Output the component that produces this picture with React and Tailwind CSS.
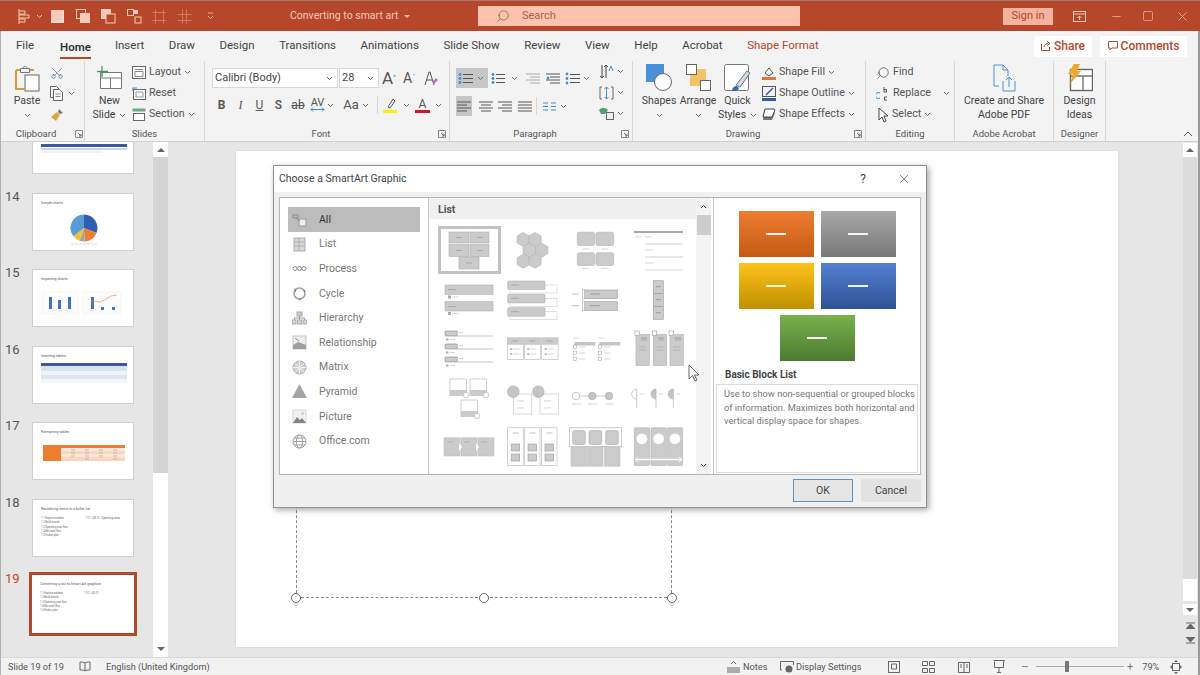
import { Scissors, Search, X, Minus, Square } from "lucide-react";

const Svg = ({ w, h, className = "", children }) => (
  <svg width={w} height={h} viewBox={`0 0 ${w} ${h}`} className={`shrink-0 block ${className}`} fill="none">
    {children}
  </svg>
);

const Chev = ({ c = "#666" }) => (
  <Svg w={7} h={5}>
    <path d="M1 1l2.5 2.5L6 1" stroke={c} strokeWidth="1" />
  </Svg>
);

const Launcher = ({ className }) => (
  <div className={`absolute top-[69px] ${className}`}>
    <Svg w={8} h={8}>
      <path d="M.5 7.5V.5h7v7z" stroke="#888" />
      <path d="M3 3l3 3M6 4v2H4" stroke="#666" />
    </Svg>
  </div>
);

function Group({ className, label, children, launcher }) {
  return (
    <div className={`relative flex flex-col h-full border-r border-[#d6d6d6] shrink-0 ${className}`}>
      <div className="h-[66px] flex">{children}</div>
      <div className={`text-center text-[9.5px] leading-[14px] text-[#555] ${launcher ? "pr-[12px]" : ""}`}>{label}</div>
      {launcher}
    </div>
  );
}

function LargeBtn({ icon, lines, chev, className = "" }) {
  return (
    <div className={`flex flex-col items-center text-[10.5px] leading-[14px] text-[#444] ${className}`}>
      <div className="h-[33px] flex items-center justify-center shrink-0">{icon}</div>
      {lines.map((l, i) => (
        <div key={i} className="flex items-center gap-1 whitespace-nowrap">
          {l}
          {chev === i && <Chev />}
        </div>
      ))}
      {chev === lines.length && (
        <div className="h-[14px] flex items-center">
          <Chev />
        </div>
      )}
    </div>
  );
}

function SmallBtn({ icon, label, chev = true, className = "" }) {
  return (
    <div className={`h-[21px] flex items-center gap-[3px] text-[10.7px] text-[#555] whitespace-nowrap ${className}`}>
      {icon}
      <span>{label}</span>
      {chev && <Chev />}
    </div>
  );
}

// horizontal lines icon, used for the paragraph buttons
const Lines = ({ rows, w = 15, h = 13, dots, c = "#555" }) => (
  <Svg w={w} h={h}>
    {rows.map((r, i) => (
      <path key={i} d={`M${r[0]} ${r[1]}H${r[2]}`} stroke={c} strokeWidth="1" />
    ))}
    {dots && dots.map((d, i) => <circle key={i} cx={d[0]} cy={d[1]} r="1.4" fill="#3d8fd1" />)}
  </Svg>
);

const Wdot = () => <span className="w-[20px] h-[1.5px] bg-white/90 block" />;

const bulletRows = [[5, 2.5, 15], [5, 6.5, 15], [5, 10.5, 15]];
const bulletDots = [[2, 2.5], [2, 6.5], [2, 10.5]];
const alignL = [[1, 2, 15], [1, 5, 11], [1, 8, 15], [1, 11, 11]];
const alignC = [[1, 2, 15], [3, 5, 13], [1, 8, 15], [3, 11, 13]];
const alignR = [[1, 2, 15], [5, 5, 15], [1, 8, 15], [5, 11, 15]];
const alignJ = [[1, 2, 15], [1, 5, 15], [1, 8, 15], [1, 11, 15]];

function TitleBar() {
  const c = "#f6c9b8";
  return (
    <div className="h-[31px] bg-[#b7472a] border-t border-[#9c7a70] flex items-center shrink-0">
      <div className="w-[290px] shrink-0 flex items-center pl-[15px]">
        <Svg w={16} h={15}>
          <path d="M4 0v15M4 2h6v3H4M4 6h10v3H4M4 10h6v3H4" stroke={c} />
        </Svg>
        <span className="ml-[5px]"><Chev c={c} /></span>
        <span className="ml-[8px] w-[13px] h-[13px] bg-[#f6c9b8] border-r-2 border-b-2 border-[#f1dcd4]" />
        <Svg w={15} h={15} className="ml-[12px]">
          <rect x=".5" y=".5" width="9" height="9" stroke={c} />
          <rect x="4" y="4" width="10" height="10" fill={c} />
        </Svg>
        <Svg w={15} h={15} className="ml-[10px]">
          <rect x="0" y="0" width="10" height="10" fill={c} />
          <rect x="5" y="5" width="9" height="9" stroke={c} fill="#b7472a" />
        </Svg>
        <Svg w={15} h={15} className="ml-[11px]">
          <rect x=".5" y=".5" width="6" height="6" stroke={c} />
          <rect x="8" y="8" width="6" height="6" stroke={c} />
          <rect x="7" y="1" width="4" height="4" fill={c} />
        </Svg>
        <Svg w={15} h={15} className="ml-[10px] opacity-40">
          <path d="M.5 3.5h14M.5 11.5h14M3.5.5v14M11.5.5v14" stroke={c} />
        </Svg>
        <Svg w={15} h={15} className="ml-[10px] opacity-40">
          <path d="M.5 5.5h14M.5 11.5h14M5.5.5v14M9.5.5v14" stroke={c} />
        </Svg>
        <span className="ml-[15px] opacity-80">
          <Svg w={7} h={8}>
            <path d="M1 1h5M1 4l2.5 2.5L6 4" stroke={c} />
          </Svg>
        </span>
      </div>
      <div className="w-[188px] shrink-0 text-[10.5px] text-[#f3c7b6] flex items-center gap-[6px]">
        Converting to smart art
        <span className="w-0 h-0 border-x-[3px] border-x-transparent border-t-[3px] border-t-[#f3c7b6]" />
      </div>
      <div className="w-[322px] h-[20px] shrink-0 bg-[#fbc3ae] flex items-center pl-[18px] gap-[12px] text-[11px] text-[#a5604a]">
        <Search size={14} strokeWidth={1.3} className="-scale-x-100" color="#8c5a49" />
        Search
      </div>
      <div className="w-[203px] shrink-0" />
      <div className="w-[50px] h-[17px] shrink-0 bg-[#f3b39e] flex items-center justify-center text-[11px] text-[#b7472a]">
        Sign in
      </div>
      <div className="ml-[20px] w-[13px] shrink-0">
        <Svg w={13} h={11}>
          <rect x=".5" y=".5" width="12" height="10" stroke={c} />
          <path d="M.5 3h12M6.5 9V5M4.5 7l2-2 2 2" stroke={c} />
        </Svg>
      </div>
      <Minus size={13} color={c} strokeWidth={1.2} className="ml-[24px]" />
      <Square size={12} color={c} strokeWidth={1.2} className="ml-[19px]" />
      <X size={15} color={c} strokeWidth={1.2} className="ml-[21px]" />
    </div>
  );
}

function Tabs() {
  const tabs = ["Insert", "Draw", "Design", "Transitions", "Animations", "Slide Show", "Review", "View", "Help", "Acrobat"];
  return (
    <div className="h-[30px] bg-[#f3f3f3] flex items-center shrink-0 pl-[16px] text-[11.5px] text-[#444] relative">
      <span>File</span>
      <span className="ml-[26px] font-semibold text-[#333] border-b-2 border-[#b7472a] h-[23px] mt-[2px] pt-[3px]">Home</span>
      <div className="ml-[24px] flex gap-[24.5px]">
        {tabs.map((t) => (
          <span key={t}>{t}</span>
        ))}
        <span className="text-[#b7472a]">Shape Format</span>
      </div>
      <div className="ml-auto mr-[13px] flex gap-[8px] text-[#b7472a] font-medium">
        <div className="w-[58px] h-[21px] bg-white flex items-center justify-center gap-[3px] text-[12px]">
          <Svg w={10} h={10}>
            <path d="M.5 3v6.5h8V6M3 6c0-2 2-3.5 4-3.5M6 .5l3 2-3 2" stroke="#b7472a" />
          </Svg>
          Share
        </div>
        <div className="w-[87px] h-[21px] bg-white flex items-center justify-center gap-[3px] text-[12px]">
          <Svg w={10} h={10}>
            <path d="M.5.5h9v6.5H4L2 9V7H.5z" stroke="#b7472a" />
          </Svg>
          Comments
        </div>
      </div>
    </div>
  );
}

function Ribbon() {
  return (
    <div className="h-[81px] bg-[#f3f3f3] border-b border-[#d0d0d0] flex shrink-0 relative">
      <Group
        className="w-[85px]"
        label="Clipboard"
        launcher={<Launcher className="left-[75px]" />}
      >
        <LargeBtn
          className="w-[48px] pl-[6px]"
          lines={["Paste"]}
          chev={1}
          icon={
            <Svg w={26} h={28}>
              <path d="M2 6h5M15 6h5M2 6v19h8" stroke="#d99a3c" strokeWidth="2" />
              <path d="M6.5 4.5h9v4h-9zM9 4c0-2 4-2 4 0" stroke="#777" />
              <rect x="11" y="11" width="14" height="16" fill="#fff" stroke="#666" />
            </Svg>
          }
        />
        <div className="flex flex-col pt-[1px] pl-[2px]">
          <div className="h-[21px] flex items-center">
            <Scissors size={14} strokeWidth={1.2} color="#4a6e95" className="-rotate-90" />
          </div>
          <div className="h-[21px] flex items-center gap-[4px]">
            <Svg w={14} h={15}>
              <path d="M3.5 11.5H.5V.5h6l3 3" stroke="#666" />
              <path d="M3.5 3.5h6l3 3v8h-9z" fill="#fff" stroke="#666" />
              <path d="M5.5 8h5M5.5 10.5h5" stroke="#888" />
            </Svg>
            <Chev />
          </div>
          <div className="h-[21px] flex items-center">
            <Svg w={14} h={14}>
              <path d="M9 1l4 4-3 1-2-2z" fill="#777" />
              <path d="M7 4l3 3-4 6-5-4z" fill="#e2a33d" />
            </Svg>
          </div>
        </div>
      </Group>

      <Group className="w-[120px]" label="Slides">
        <LargeBtn
          className="w-[45px] ml-[2px]"
          lines={["New", "Slide"]}
          chev={1}
          icon={
            <Svg w={26} h={24}>
              <path d="M3.5 6.5h21v16h-21z" stroke="#777" fill="#fff" />
              <path d="M4 12h20M13.5 12v10" stroke="#777" />
              <path d="M5 0v11M0 5.5h11" stroke="#3f9a58" strokeWidth="1.3" />
            </Svg>
          }
        />
        <div className="flex flex-col pt-[1px]">
          <SmallBtn
            label="Layout"
            icon={
              <Svg w={14} h={13}>
                <rect x=".5" y=".5" width="13" height="12" fill="#fff" stroke="#666" />
                <path d="M3 3.5h8M3 5.5v5h8v-5z" stroke="#888" />
              </Svg>
            }
          />
          <SmallBtn
            label="Reset"
            chev={false}
            icon={
              <Svg w={14} h={13}>
                <rect x="1.5" y="2.5" width="12" height="10" fill="#fff" stroke="#666" />
                <path d="M1 4V1h4" stroke="#3d8fd1" strokeWidth="1.2" />
                <path d="M4 5h7v5H4z" stroke="#999" />
              </Svg>
            }
          />
          <SmallBtn
            label="Section"
            icon={
              <Svg w={14} h={13}>
                <rect x=".5" y=".5" width="13" height="3" fill="#6ba97e" />
                <rect x="1.5" y="5.5" width="11" height="7" fill="#fff" stroke="#666" />
              </Svg>
            }
          />
        </div>
      </Group>

      <Group
        className="w-[245px]"
        label="Font"
        launcher={<Launcher className="left-[233px]" />}
      >
        <div className="flex flex-col pl-[7px] pt-[7px]">
          <div className="flex items-center h-[20px] text-[#444] text-[11px]">
            <div className="w-[126px] h-[20px] bg-white border border-[#d8d8d8] flex items-center justify-between pl-[2px] pr-[4px]">
              Calibri (Body)
              <Chev />
            </div>
            <div className="ml-[1px] w-[40px] h-[20px] bg-white border border-[#d8d8d8] flex items-center justify-between pl-[2px] pr-[4px]">
              28
              <Chev />
            </div>
            <span className="ml-[3px] w-[19px] text-[17px] text-[#555] leading-none">A<sup className="text-[7px] text-[#3d8fd1]">^</sup></span>
            <span className="ml-[2px] w-[19px] text-[14px] text-[#555] leading-none">A<sup className="text-[7px] text-[#3d8fd1]">ˇ</sup></span>
            <Svg w={15} h={15} className="ml-[2px]">
              <path d="M1 14L5 1h1l4 13M3 9h5" stroke="#555" />
              <path d="M8 11l4-4 2 2-4 4z" fill="#b678c9" />
            </Svg>
          </div>
          <div className="flex items-center h-[20px] mt-[7px] text-[#555] text-[12px]">
            <span className="w-[19px] text-center font-bold text-[12px]">B</span>
            <span className="w-[19px] text-center italic font-['Liberation_Serif',serif]">I</span>
            <span className="w-[19px] text-center underline">U</span>
            <span className="w-[19px] text-center font-medium">S</span>
            <span className="w-[20px] text-center line-through text-[12px]">ab</span>
            <span className="w-[19px] text-center text-[11px] leading-[9px] flex flex-col items-center">
              AV
              <Svg w={15} h={5}>
                <path d="M1 2.5h13M1 2.5l2-2M1 2.5l2 2M14 2.5l-2-2M14 2.5l-2 2" stroke="#3d8fd1" />
              </Svg>
            </span>
            <Chev />
            <span className="ml-[7px] w-[20px] text-center text-[13px]">Aa</span>
            <span className="ml-[1px]"><Chev /></span>
            <span className="ml-[8px] w-px h-[18px] bg-[#d6d6d6]" />
            <span className="ml-[4px]">
              <Svg w={16} h={16}>
                <path d="M6 10l5-8 2 2-5 7z" stroke="#555" />
                <rect x="1" y="13" width="14" height="3" fill="#fcf000" />
              </Svg>
            </span>
            <span className="ml-[5px]"><Chev /></span>
            <span className="ml-[5px] flex flex-col items-center w-[15px] text-[12px] leading-[12px]">
              A
              <span className="w-[15px] h-[3px] bg-[#d8141c]" />
            </span>
            <span className="ml-[5px]"><Chev /></span>
          </div>
        </div>
      </Group>

      <Group
        className="w-[183px]"
        label="Paragraph"
        launcher={<Launcher className="left-[171px]" />}
      >
        <div className="flex flex-col pl-[6px] pt-[7px] w-[149px]">
          <div className="flex items-center h-[20px]">
            <div className="w-[32px] h-[20px] bg-[#c6c6c6] flex items-center pl-[2px] gap-[4px]">
              <Lines rows={bulletRows} dots={bulletDots} />
              <Chev />
            </div>
            <span className="ml-[3px]"><Lines rows={bulletRows} dots={bulletDots} w={14} /></span>
            <span className="ml-[6px]"><Chev /></span>
            <span className="ml-[7px]"><Lines rows={alignR} c="#aaa" /></span>
            <span className="ml-[5px]"><Lines rows={alignR} dots={[[3, 6]]} /></span>
            <span className="ml-[5px]"><Lines rows={bulletRows} dots={[[2, 2], [2, 6.5], [2, 11]]} /></span>
            <span className="ml-[3px]"><Chev /></span>
          </div>
          <div className="flex items-center h-[20px] mt-[8px]">
            <div className="w-[16px] h-[20px] bg-[#c6c6c6] flex items-center">
              <Lines rows={alignL} />
            </div>
            <span className="ml-[6px]"><Lines rows={alignC} /></span>
            <span className="ml-[4px]"><Lines rows={alignR} /></span>
            <span className="ml-[5px]"><Lines rows={alignJ} /></span>
            <span className="ml-[4px] w-px h-[18px] bg-[#d6d6d6]" />
            <span className="ml-[5px]">
              <Lines rows={[[1, 3, 6], [1, 6.5, 6], [1, 10, 6], [9, 3, 14], [9, 6.5, 14], [9, 10, 14]]} c="#3d8fd1" />
            </span>
            <span className="ml-[3px]"><Chev /></span>
          </div>
        </div>
        <div className="flex flex-col">
          <div className="h-[21px] flex items-center gap-[3px]">
            <Svg w={15} h={16}>
              <path d="M3 1v13M1 12l2 2 2-2M7 14V1M5 3l2-2 2 2" stroke="#444" />
              <path d="M10 7l2-5 2 5" stroke="#3d8fd1" />
            </Svg>
            <Chev />
          </div>
          <div className="h-[21px] flex items-center gap-[3px]">
            <Svg w={15} h={14}>
              <path d="M3 1H1v12h2M12 1h2v12h-2" stroke="#666" />
              <path d="M7.5 1v12M5.5 3l2-2 2 2M5.5 11l2 2 2-2" stroke="#3d8fd1" />
            </Svg>
            <Chev />
          </div>
          <div className="h-[21px] flex items-center gap-[3px]">
            <Svg w={15} h={13}>
              <path d="M0 3c3-3 7-2 9 0l-3 4H2z" fill="#4ca36b" />
              <rect x="7.5" y="5.5" width="7" height="7" fill="#eee" stroke="#666" />
            </Svg>
            <Chev />
          </div>
        </div>
      </Group>

      <Group
        className="w-[233px]"
        label="Drawing"
        launcher={<Launcher className="left-[221px]" />}
      >
        <LargeBtn
          className="w-[40px] ml-[6px]"
          lines={["Shapes"]}
          chev={1}
          icon={
            <Svg w={26} h={27}>
              <rect x="0" y="0" width="18" height="18" fill="#4a90d9" />
              <circle cx="17" cy="18" r="8.5" fill="#fff" stroke="#666" />
            </Svg>
          }
        />
        <LargeBtn
          className="w-[38px]"
          lines={["Arrange"]}
          chev={1}
          icon={
            <Svg w={25} h={27}>
              <rect x="4" y="5" width="16" height="17" fill="#f2c263" />
              <rect x=".5" y=".5" width="10" height="10" fill="#fff" stroke="#666" />
              <rect x="14.5" y="16.5" width="10" height="10" fill="#fff" stroke="#666" />
            </Svg>
          }
        />
        <LargeBtn
          className="w-[41px]"
          lines={["Quick", "Styles"]}
          chev={1}
          icon={
            <Svg w={27} h={28}>
              <rect x=".5" y=".5" width="24" height="26" rx="2" fill="#fff" stroke="#777" />
              <path d="M12 21l11-14 3 2-10 14z" fill="#cfdbe8" stroke="#777" />
              <path d="M8 27c0-3 2-5 5-5l2 2c-1 3-4 3-7 3z" fill="#2f6fa8" />
            </Svg>
          }
        />
        <div className="flex flex-col ml-[4px] pt-[1px]">
          <SmallBtn
            label="Shape Fill"
            icon={
              <Svg w={14} h={14}>
                <path d="M3 7l4-5 4 5-4 3z" stroke="#555" />
                <rect x="0" y="11" width="14" height="3" fill="#e97132" />
              </Svg>
            }
          />
          <SmallBtn
            label="Shape Outline"
            icon={
              <Svg w={14} h={15}>
                <rect x=".5" y=".5" width="13" height="10" stroke="#555" />
                <path d="M4 9l7-7" stroke="#2f5fa8" strokeWidth="1.5" />
                <rect x="0" y="12" width="14" height="3" fill="#2f5fa8" />
              </Svg>
            }
          />
          <SmallBtn
            label="Shape Effects"
            icon={
              <Svg w={14} h={13}>
                <path d="M2 3h9l2 2-3 7H1z" fill="#777" />
                <path d="M3 1h9l1 1-3 7H1z" fill="#fff" stroke="#444" />
              </Svg>
            }
          />
        </div>
      </Group>

      <Group className="w-[89px]" label="Editing">
        <div className="flex flex-col pl-[10px] pt-[1px] w-full">
          <SmallBtn
            label="Find"
            chev={false}
            icon={
              <Search size={14} strokeWidth={1.2} color="#444" className="-scale-x-100" />
            }
          />
          <div className="flex items-center">
            <SmallBtn
              label="Replace"
              chev={false}
              icon={
                <Svg w={14} h={15}>
                  <path d="M4 7a3 3 0 1 0 0 5" stroke="#3d8fd1" />
                  <path d="M8 1v5M8 3.5h2.5v2.5H8M11 11h-2.5v3H11" stroke="#555" />
                </Svg>
              }
            />
            <span className="ml-[12px]"><Chev /></span>
          </div>
          <SmallBtn
            label="Select"
            icon={
              <Svg w={13} h={16}>
                <path d="M3 1v12l3-3 2 5 2-1-2-5h4z" fill="#fff" stroke="#444" />
              </Svg>
            }
          />
        </div>
      </Group>

      <Group className="w-[99px]" label="Adobe Acrobat">
        <LargeBtn
          className="w-full"
          lines={["Create and Share", "Adobe PDF"]}
          icon={
            <Svg w={23} h={28}>
              <path d="M6 22H1V1h9l5 5v6" stroke="#4a90d9" />
              <path d="M10 1v5h5" stroke="#4a90d9" />
              <path d="M10 17v10h12V17M16 23V13M13 16l3-3 3 3" stroke="#4a90d9" />
            </Svg>
          }
        />
      </Group>

      <Group className="w-[52px]" label="Designer">
        <LargeBtn
          className="w-full"
          lines={["Design", "Ideas"]}
          icon={
            <Svg w={27} h={28}>
              <rect x="4.5" y="5.5" width="22" height="21" fill="#fff" stroke="#666" strokeWidth="1.4" />
              <path d="M5 12h21M17 12v14" stroke="#777" strokeWidth="1.4" />
              <path d="M8 0h6l-3 7h4L4 20l3-10H2z" fill="#f0a92e" />
            </Svg>
          }
        />
      </Group>

      <div className="absolute right-[7px] bottom-[4px]">
        <Svg w={10} h={6}>
          <path d="M1 5l4-4 4 4" stroke="#555" />
        </Svg>
      </div>
    </div>
  );
}

const tx = { fontSize: 3.6, fill: "#555" };

function Thumb({ n, active, children, className = "" }) {
  return (
    <div className={`flex h-[58px] shrink-0 ${className}`}>
      <span className={`w-[32px] pl-[5px] text-[13px] leading-[8px] ${active ? "text-[#b7472a]" : "text-[#555]"}`}>
        {n}
      </span>
      <div className={`w-[102px] h-[58px] bg-white ${active ? "outline-[3px] outline-[#b7472a]" : "border border-[#cfcfcf]"}`}>
        <svg width="102" height="58" viewBox="0 0 102 58" className="block" fill="none">{children}</svg>
      </div>
    </div>
  );
}

const ListLines = ({ right }) => (
  <>
    {["1.1 Explore markets", "1.2 Build brands", "1.3 Operating cost flow", "1.4 Net cash flow", "1.5 Endow plan"].map((t, i) => (
      <text key={t} x="8" y={19 + i * 4.3} style={{ fontSize: 2.6, fill: "#666" }}>{t}</text>
    ))}
    <text x="52" y="19" style={{ fontSize: 2.6, fill: "#666" }}>{right}</text>
  </>
);

function SlidePanel() {
  return (
    <div className="w-[168px] bg-[#e6e6e6] relative overflow-hidden shrink-0">
      <div className="flex flex-col gap-[18.5px] -mt-[26px]">
        <Thumb n="">
          <rect x="8" y="27" width="86" height="3" fill="#3c5a99" />
          <rect x="8" y="31" width="86" height="2" fill="#c9d3e6" />
          <path d="M9 35h60" stroke="#ccc" strokeWidth=".6" />
        </Thumb>
        <Thumb n="14">
          <text x="8" y="10" style={tx}>Simple charts</text>
          <path d="M51 34V20.5A13.5 13.5 0 0 1 63.5 39.06z" fill="#2f5fb5" />
          <path d="M51 34L63.5 39.06A13.5 13.5 0 0 1 51.5 47.5z" fill="#ed7d31" />
          <path d="M51 34L51.5 47.5A13.5 13.5 0 0 1 46.4 46.7z" fill="#a5a5a5" />
          <path d="M51 34L46.4 46.7A13.5 13.5 0 0 1 40.4 42.3z" fill="#f2c230" />
          <path d="M51 34L40.4 42.3A13.5 13.5 0 0 1 51 20.5z" fill="#5b9bd5" />
          <path d="M38 50h26" stroke="#ccc" strokeWidth=".8" strokeDasharray="3 1" />
        </Thumb>
        <Thumb n="15">
          <text x="8" y="10" style={tx}>Importing charts</text>
          <rect x="9" y="22" width="36" height="22" fill="#fcfcfc" stroke="#eee" strokeWidth=".5" />
          <rect x="16" y="27" width="3" height="12" fill="#4472c4" />
          <rect x="25" y="30" width="3" height="9" fill="#4472c4" />
          <rect x="35" y="27" width="3" height="12" fill="#4472c4" />
          <rect x="50" y="22" width="38" height="22" fill="#fcfcfc" stroke="#eee" strokeWidth=".5" />
          <rect x="58" y="27" width="3" height="12" fill="#4472c4" />
          <rect x="68" y="37" width="3" height="3" fill="#4472c4" />
          <rect x="79" y="37" width="3" height="3" fill="#4472c4" />
          <path d="M58 31l10 1 10-6 6-1" stroke="#ed7d31" strokeWidth=".6" />
        </Thumb>
        <Thumb n="16">
          <text x="8" y="10" style={tx}>Inserting tables</text>
          <rect x="8" y="16" width="86" height="3" fill="#3c5a99" />
          <rect x="8" y="19" width="86" height="5" fill="#d9e0ef" />
          <rect x="8" y="24" width="86" height="4" fill="#f0f2f8" />
          <rect x="8" y="28" width="86" height="4" fill="#dfe4f1" />
          <rect x="8" y="32" width="86" height="4" fill="#f4f6fa" />
        </Thumb>
        <Thumb n="17">
          <text x="8" y="10" style={tx}>Formatting tables</text>
          <rect x="10" y="22" width="82" height="3" fill="#ed7d31" />
          <rect x="10" y="25" width="18" height="13" fill="#ed7d31" />
          <rect x="28" y="25" width="64" height="3" fill="#fde9dc" />
          <rect x="28" y="28" width="64" height="3" fill="#fbd5bd" />
          <rect x="28" y="31" width="64" height="3" fill="#fde9dc" />
          <rect x="28" y="34" width="64" height="4" fill="#fbd5bd" />
          <path d="M38 27h4M52 27h4M66 27h4M80 27h4M38 30h4M52 30h4M66 30h4M80 30h4M38 33h4M52 33h4M66 33h4M80 33h4M52 36h4M80 36h4" stroke="#999" strokeWidth=".6" />
        </Thumb>
        <Thumb n="18">
          <text x="8" y="10" style={tx}>Reordering items in a bullet list</text>
          <ListLines right="1.9.1 / 49.31 - Operating costs" />
        </Thumb>
        <Thumb n="19" active>
          <text x="8" y="10" style={tx}>Converting a list to Smart Art graphics</text>
          <ListLines right="1.9.2 / 49.31" />
        </Thumb>
      </div>
      {/* scrollbar */}
      <div className="absolute right-0 top-0 bottom-0 w-[15px] bg-white flex flex-col">
        <div className="h-[15px] bg-white flex items-center justify-center">
          <span className="w-0 h-0 border-x-[4px] border-x-transparent border-b-[4px] border-b-[#666]" />
        </div>
        <div className="h-[316px] bg-[#d4d4d4]" />
        <div className="flex-1" />
        <div className="h-[15px] flex items-center justify-center mb-[1px]">
          <span className="w-0 h-0 border-x-[4px] border-x-transparent border-t-[4px] border-t-[#666]" />
        </div>
      </div>
    </div>
  );
}

const Bx = ({ x, y, w, h, r = 0, f = "#cbcbcb", s = "#b0b0b0" }) => (
  <rect x={x} y={y} width={w} height={h} rx={r} fill={f} stroke={s} strokeWidth=".6" />
);
const Ln = ({ x, y, w, c = "#c4c4c4", t = 0.7 }) => <path d={`M${x} ${y}h${w}`} stroke={c} strokeWidth={t} />;
const hex = (cx, cy, r = 7) =>
  [0, 1, 2, 3, 4, 5]
    .map((i) => {
      const a = (Math.PI / 3) * i + Math.PI / 6;
      return `${(cx + r * Math.cos(a)).toFixed(1)},${(cy + r * Math.sin(a)).toFixed(1)}`;
    })
    .join(" ");

const galleryThumbs = [
  <>
    <Bx x={11} y={6} w={20} h={11} /><Bx x={32} y={6} w={19} h={11} />
    <Bx x={11} y={18.5} w={20} h={12} /><Bx x={32} y={18.5} w={19} h={12} />
    <Bx x={21} y={31} w={20} h={12} />
    <Ln x={18} y={11.5} w={6} c="#999" /><Ln x={39} y={11.5} w={6} c="#999" /><Ln x={18} y={24.5} w={6} c="#999" /><Ln x={39} y={24.5} w={6} c="#999" /><Ln x={28} y={37} w={6} c="#999" />
  </>,
  <>
    {[[22.3, 13.5], [34, 13.5], [28.3, 24.2], [40.7, 24.2], [22.3, 35.2], [34, 35.2]].map(([x, y], i) => (
      <polygon key={i} points={hex(x, y)} fill="#cbcbcb" stroke="#b0b0b0" strokeWidth=".6" />
    ))}
  </>,
  <>
    <Bx x={13.3} y={6.2} w={17.4} h={13.3} r={2} /><Bx x={32} y={6.2} w={17.7} h={13.3} r={2} />
    <Bx x={13.3} y={26.8} w={17.4} h={12.7} r={2} /><Bx x={32} y={26.8} w={17.7} h={12.7} r={2} />
    <Ln x={18} y={23} w={7} /><Ln x={37} y={23} w={7} /><Ln x={18} y={42.5} w={7} /><Ln x={37} y={42.5} w={7} />
  </>,
  <>
    <Ln x={7} y={6} w={49} c="#888" t={1.3} />
    <Ln x={8} y={11} w={6} /><Ln x={18} y={11} w={6} /><Ln x={18} y={18} w={38} c="#bbb" />
    <Ln x={18} y={24} w={8} /><Ln x={18} y={31} w={38} c="#bbb" /><Ln x={18} y={37} w={8} /><Ln x={18} y={44} w={38} c="#ccc" />
  </>,
  <>
    <Bx x={7} y={9} w={48} h={9.3} /><Bx x={7} y={25.7} w={48} h={9.3} />
    <Ln x={10} y={13.5} w={8} c="#999" /><Ln x={10} y={30.5} w={8} c="#999" />
    <rect x={10} y={19.5} width={3} height={3} fill="#aaa" /><rect x={10} y={36} width={3} height={3} fill="#aaa" />
    <Ln x={14} y={21} w={6} /><Ln x={14} y={37.5} w={6} />
  </>,
  <>
    {[5, 18.3, 31.7].map((y) => (
      <g key={y}>
        <rect x={9} y={y + 4} width={47} height={8} fill="#fff" stroke="#ccc" strokeWidth=".6" />
        <Bx x={6.7} y={y} w={37.3} h={8.6} r={1} />
        <Ln x={10} y={y + 4} w={8} c="#999" />
      </g>
    ))}
  </>,
  <>
    {[14, 25.7].map((y) => (
      <g key={y}>
        <Ln x={8} y={y + 4} w={7} c="#aaa" />
        <Bx x={18.3} y={y} w={35} h={8.6} s="#999" />
        <rect x={18.3} y={y - 0.5} width={2} height={9.6} fill="#fff" stroke="#aaa" strokeWidth=".5" />
        <Ln x={26} y={y + 4} w={10} c="#888" />
      </g>
    ))}
  </>,
  <>
    {[4.7, 17.7, 30.7].map((y) => (
      <g key={y}>
        <Bx x={26.3} y={y} w={10} h={12.6} s="#999" />
        <Ln x={29} y={y + 6} w={5} c="#888" />
      </g>
    ))}
  </>,
  <>
    {[6, 19, 32].map((y) => (
      <g key={y}>
        <Bx x={7} y={y} w={12.3} h={5} r={1} s="#888" />
        <Ln x={19} y={y + 5} w={36} c="#aaa" />
        <Ln x={21} y={y + 1.5} w={4} c="#bbb" />
        <rect x={8} y={y + 7.5} width={2.5} height={2} fill="#aaa" />
        <Ln x={12} y={y + 8.5} w={5} />
      </g>
    ))}
  </>,
  <>
    {[6.3, 23.3, 40.7].map((x) => (
      <g key={x}>
        <rect x={x} y={12.8} width={16.4} height={21.7} fill="#fff" stroke="#b5b5b5" strokeWidth=".6" />
        <rect x={x} y={12.8} width={16.4} height={7} fill="#cbcbcb" />
        <Ln x={x + 5} y={16} w={6} c="#999" />
        <rect x={x + 3} y={23} width={2} height={2} fill="#bbb" /><Ln x={x + 6} y={24} w={6} />
        <rect x={x + 3} y={28} width={2} height={2} fill="#bbb" /><Ln x={x + 6} y={29} w={6} />
      </g>
    ))}
  </>,
  <>
    {[9.3, 34.3].map((x) => (
      <g key={x}>
        <rect x={x + 1} y={17} width={21} height={3.5} fill="#c4c4c4" />
        <Ln x={x} y={13} w={6} />
        {[20, 26, 32].map((y) => (
          <g key={y}>
            <rect x={x} y={y} width={3.4} height={3.4} fill="#fff" stroke="#999" strokeWidth=".5" />
            <Ln x={x + 6} y={y + 2} w={6} />
          </g>
        ))}
      </g>
    ))}
  </>,
  <>
    {[9, 26.3, 43].map((x) => (
      <g key={x}>
        <Bx x={x} y={9.5} w={13.3} h={31} />
        <Ln x={x + 5} y={13} w={6} c="#888" /><Ln x={x + 5} y={15} w={6} c="#999" />
        <Ln x={x + 3} y={22} w={7} c="#aaa" /><Ln x={x + 3} y={25} w={7} c="#aaa" />
        <rect x={x - 1} y={6} width={4.5} height={4.5} fill="#fff" stroke="#888" strokeWidth=".5" />
      </g>
    ))}
  </>,
  <>
    {[[12, 4], [32, 4], [23, 25]].map(([x, y]) => (
      <g key={x}>
        <rect x={x} y={y} width={16.5} height={16.7} fill="#fff" stroke="#b0b0b0" strokeWidth=".6" />
        <rect x={x} y={y + 11} width={16.5} height={5.7} fill="#cbcbcb" />
        <circle cx={x + 16} cy={y + 16} r={2.8} fill="#fff" stroke="#aaa" strokeWidth=".6" />
      </g>
    ))}
  </>,
  <>
    {[[12.3, 19], [39, 19]].map(([x, y]) => (
      <g key={x}>
        <rect x={x} y={y} width={18.5} height={20} fill="#fff" stroke="#c0c0c0" strokeWidth=".6" />
        <Ln x={x + 4} y={y + 7} w={7} /><Ln x={x + 4} y={y + 14} w={7} />
      </g>
    ))}
    <circle cx={12.3} cy={16.7} r={5.8} fill="#c4c4c4" stroke="#aaa" strokeWidth=".6" />
    <circle cx={37.3} cy={16.7} r={5.8} fill="#c4c4c4" stroke="#aaa" strokeWidth=".6" />
  </>,
  <>
    <Ln x={12} y={21} w={33} c="#bbb" />
    <circle cx={12} cy={21} r={3.7} fill="#fff" stroke="#aaa" strokeWidth=".7" />
    <circle cx={28.3} cy={21} r={3.7} fill="#c4c4c4" stroke="#aaa" strokeWidth=".7" />
    <circle cx={45} cy={21} r={3.7} fill="#c4c4c4" stroke="#aaa" strokeWidth=".7" />
    <Ln x={8} y={29} w={9} /><Ln x={24} y={29} w={9} /><Ln x={41} y={29} w={9} />
  </>,
  <>
    {[9.7, 29, 46.3].map((x) => (
      <g key={x}>
        <path d={`M${x} 14a5 5 0 0 0 0 10z`} fill={x === 9.7 ? "#fff" : "#c4c4c4"} stroke="#aaa" strokeWidth=".6" />
        <path d={`M${x} 24v9`} stroke="#aaa" strokeWidth=".6" />
        <Ln x={x + 3} y={19} w={4} />
      </g>
    ))}
  </>,
  <>
    <Bx x={6} y={13.8} w={16} h={18.2} s="#c0c0c0" /><Bx x={23} y={13.8} w={16} h={18.2} s="#c0c0c0" /><Bx x={40} y={13.8} w={16} h={18.2} s="#c0c0c0" />
    <path d={`M21 19l3 4-3 4zM38 19l3 4-3 4z`} fill="#fff" />
    <Ln x={9} y={18} w={6} c="#aaa" /><Ln x={26} y={18} w={6} c="#aaa" /><Ln x={43} y={18} w={6} c="#aaa" />
  </>,
  <>
    {[6.7, 23.5, 40.5].map((x) => (
      <g key={x}>
        <rect x={x} y={3.8} width={15.5} height={37.7} fill="#fff" stroke="#b5b5b5" strokeWidth=".6" />
        <Ln x={x + 5} y={9} w={6} c="#aaa" />
        <Bx x={x + 3.5} y={20} w={8.5} h={7} s="#999" />
        <Bx x={x + 3.5} y={30} w={8.5} h={7} s="#999" />
      </g>
    ))}
  </>,
  <>
    <rect x={5.3} y={3.8} width={52.4} height={19} fill="#fff" stroke="#aaa" strokeWidth=".6" />
    {[8.7, 25, 41.7].map((x) => (
      <Bx key={x} x={x} y={6.5} w={12.6} h={14} r={2} s="#aaa" />
    ))}
    {[7, 23.5, 40.5].map((x) => (
      <Bx key={x} x={x} y={22.8} w={15.5} h={19.4} s="#c0c0c0" />
    ))}
  </>,
  <>
    {[7.3, 24, 40.3].map((x) => (
      <g key={x}>
        <Bx x={x} y={3.8} w={15.3} h={37.7} r={1} />
        <circle cx={x + 7.6} cy={14.8} r={5.4} fill="#fff" />
      </g>
    ))}
    <path d="M9 35.5h45" stroke="#fff" strokeWidth="1.6" />
    <path d="M11 33l-3 2.5 3 2.5M52 33l3 2.5-3 2.5" stroke="#fff" strokeWidth="1" />
  </>,
];

const catIcon = {
  list: <><rect x="2" y="1" width="11" height="13" fill="#cfcfcf" stroke="#999" /><path d="M2 5h11M2 9h11M7 1v13" stroke="#999" /></>,
  process: <><circle cx="3" cy="7.5" r="2" stroke="#777" /><circle cx="7.5" cy="7.5" r="2" stroke="#777" /><circle cx="12" cy="7.5" r="2" stroke="#777" /></>,
  cycle: <><circle cx="7.5" cy="7.5" r="5.5" stroke="#888" strokeWidth="1.5" /><path d="M2 3l2 1-1 2M13 4l-1 2M7 14l2-1" stroke="#555" /></>,
  hierarchy: <><rect x="5" y="1" width="5" height="4" fill="#bbb" stroke="#999" /><path d="M7.5 5v2M2.5 7h10v2M2.5 7v2M7.5 7v2" stroke="#888" /><rect x="0" y="9" width="4" height="4" fill="#ccc" stroke="#999" /><rect x="5.5" y="9" width="4" height="4" fill="#ccc" stroke="#999" /><rect x="11" y="9" width="4" height="4" fill="#ccc" stroke="#999" /></>,
  relationship: <><rect x="1" y="1" width="13" height="13" fill="#e9e9e9" stroke="#bbb" /><path d="M1 10l5-3 8 3v4H1z" fill="#888" /><path d="M3 3l4 3" stroke="#777" /></>,
  matrix: <><circle cx="7.5" cy="7.5" r="6.5" fill="#c5c5c5" stroke="#999" /><path d="M7.5 1v13M1 7.5h13M3 3l9 9M12 3l-9 9" stroke="#eee" /></>,
  pyramid: <path d="M7.5 0L15 14H0z" fill="#8f8f8f" />,
  picture: <><rect x="1" y="1" width="13" height="13" fill="#eee" stroke="#ccc" /><path d="M1 14l4-6 3 3 2-2 4 5z" fill="#666" /><circle cx="10.5" cy="4.5" r="1.3" fill="#bbb" /></>,
  office: <><circle cx="7.5" cy="7.5" r="6.5" stroke="#888" /><ellipse cx="7.5" cy="7.5" rx="3" ry="6.5" stroke="#888" /><path d="M1 7.5h13M2 4h11M2 11h11" stroke="#888" /></>,
};

function Dialog() {
  const cats = [
    ["List", "list"], ["Process", "process"], ["Cycle", "cycle"], ["Hierarchy", "hierarchy"],
    ["Relationship", "relationship"], ["Matrix", "matrix"], ["Pyramid", "pyramid"], ["Picture", "picture"], ["Office.com", "office"],
  ];
  return (
    <div className="absolute left-[273px] top-[165px] w-[654px] h-[343px] bg-[#f0f0f0] border border-[#8f8f8f] shadow-[2px_2px_6px_rgba(0,0,0,0.35)] flex flex-col">
      <div className="h-[26px] bg-white flex items-center pl-[5px] pr-[15px] text-[10.5px] text-[#444] shrink-0">
        Choose a SmartArt Graphic
        <span className="ml-auto text-[12px] mr-[31px]">?</span>
        <X size={14} strokeWidth={1.2} color="#444" />
      </div>
      <div className="h-[5px] shrink-0" />
      <div className="mx-[5px] h-[278px] flex shrink-0 border border-[#b5b5b5] bg-white">
        <div className="w-[149px] border-r border-[#c8c8c8] pl-[8px] pt-[9px] shrink-0 text-[10.5px] text-[#777]">
          <div className="w-[132px] h-[25px] bg-[#bcbcbc] flex items-center text-[#333]">
            <span className="w-[31px] pl-[4px]">
              <Svg w={16} h={14}>
                <rect x="7" y="6" width="7" height="7" fill="#eee" stroke="#999" />
                <path d="M1 2h5v3H1zM4 5l4 3" stroke="#888" />
              </Svg>
            </span>
            All
          </div>
          {cats.map(([t, k]) => (
            <div key={t} className="h-[24.6px] flex items-center">
              <span className="w-[31px] pl-[4px] opacity-80">
                <Svg w={15} h={15}>{catIcon[k]}</Svg>
              </span>
              {t}
            </div>
          ))}
        </div>
        <div className="w-[285px] border-r border-[#c8c8c8] shrink-0 flex overflow-hidden">
          <div className="w-[268px] shrink-0">
            <div className="h-[20px] mt-[1px] bg-[#f0f0f0] pl-[9px] text-[10.5px] font-bold text-[#555] leading-[21px]">List</div>
            <div className="grid grid-cols-[repeat(4,63px)] auto-rows-[49.5px] ml-[9px] mt-[7px]">
              {galleryThumbs.map((t, i) => (
                <div key={i} className={i === 0 ? "h-[48px] w-[63px] outline-[3px] -outline-offset-[3px] outline-[#c2c2c2]" : ""}>
                  <svg width="63" height="49" viewBox="0 0 63 49" className="block" fill="none">{t}</svg>
                </div>
              ))}
            </div>
          </div>
          <div className="w-[15px] ml-[-1px] bg-[#f3f3f3] flex flex-col items-center">
            <div className="h-[17px] flex items-center justify-center">
              <Svg w={7} h={5}><path d="M1 4l2.5-2.5L6 4" stroke="#555" /></Svg>
            </div>
            <div className="h-[20px] w-[14px] bg-[#cdcdcd]" />
            <div className="flex-1" />
            <div className="h-[18px] flex items-center justify-center">
              <Chev c="#555" />
            </div>
          </div>
        </div>
        <div className="flex-1 flex flex-col pt-[13px] pl-[2px] pr-[2px]">
          <div className="flex flex-col items-center gap-[6px]">
            <div className="flex gap-[7px]">
              <div className="w-[75px] h-[46px] bg-linear-to-b from-[#ed7d31] to-[#c55a11] flex items-center justify-center"><Wdot /></div>
              <div className="w-[75px] h-[46px] bg-linear-to-b from-[#a8a8a8] to-[#787878] flex items-center justify-center"><Wdot /></div>
            </div>
            <div className="flex gap-[7px]">
              <div className="w-[75px] h-[46px] bg-linear-to-b from-[#ffc21a] to-[#bf9000] flex items-center justify-center"><Wdot /></div>
              <div className="w-[75px] h-[46px] bg-linear-to-b from-[#5681d2] to-[#2d5294] flex items-center justify-center"><Wdot /></div>
            </div>
            <div className="w-[75px] h-[46px] bg-linear-to-b from-[#78b24e] to-[#4f7a31] flex items-center justify-center"><Wdot /></div>
          </div>
          <div className="mt-[5px] pl-[9px] h-[17px] text-[10px] font-bold text-[#444] leading-[17px]">Basic Block List</div>
          <div className="flex-1 mb-[1px] mt-[1px] border border-[#dcdcdc] pl-[7px] pt-[2px] text-[9.3px] leading-[13.5px] text-[#777]">
            Use to show non-sequential or grouped blocks of information. Maximizes both horizontal and vertical display space for shapes.
          </div>
        </div>
      </div>
      <div className="flex justify-end gap-[8px] pr-[5px] pt-[4px] text-[10.5px] text-[#444]">
        <div className="w-[60px] h-[23px] bg-[#e6e6e6] border border-[#5a93c2] flex items-center justify-center">OK</div>
        <div className="w-[60px] h-[23px] bg-[#e2e2e2] flex items-center justify-center">Cancel</div>
      </div>
      <div className="absolute left-[414px] top-[198px]">
        <Svg w={13} h={18}>
          <path d="M1 1v14l3.5-3.5 2.5 5.5 2-1-2.5-5H11z" fill="#fff" stroke="#666" />
        </Svg>
      </div>
    </div>
  );
}

function Handle({ className }) {
  return <span className={`absolute w-[10px] h-[10px] rounded-full bg-white border border-[#666] ${className}`} />;
}

function StatusBar() {
  return (
    <div className="h-[18px] bg-[#f2f2f2] border-t border-[#d8d8d8] flex items-center text-[9.2px] text-[#555] shrink-0">
      <span className="ml-[8px] w-[71px]">Slide 19 of 19</span>
      <Svg w={12} h={12}>
        <path d="M6 2C5 1 3 1 1 1v8c2 0 4 0 5 1 1-1 3-1 5-1V1c-2 0-4 0-5 1zM6 2v8" stroke="#666" />
      </Svg>
      <span className="ml-[15px] w-[103px] whitespace-nowrap">English (United Kingdom)</span>
      <div className="ml-[518px] flex items-center">
        <Svg w={13} h={13}>
          <path d="M0 8h13M0 10h13M0 12h13M4 4l2.5-2.5L9 4" stroke="#666" />
        </Svg>
        <span className="ml-[3px] w-[37px]">Notes</span>
        <Svg w={14} h={12}>
          <path d="M2 9H.5V.5h13V4" stroke="#666" />
          <circle cx="9" cy="8" r="3.5" fill="#666" />
        </Svg>
        <span className="ml-[2px] w-[92px] whitespace-nowrap">Display Settings</span>
        <Svg w={12} h={12}>
          <rect x=".5" y=".5" width="11" height="11" stroke="#666" />
          <path d="M3.5 3h5v5h-5z" stroke="#666" />
        </Svg>
        <Svg w={13} h={12} className="ml-[22px]">
          <path d="M.5.5h5v4h-5zM7.5.5h5v4h-5zM.5 7.5h5v4h-5zM7.5 7.5h5v4h-5z" stroke="#666" />
        </Svg>
        <Svg w={12} h={12} className="ml-[23px]">
          <path d="M.5 1.5h11v10H.5zM6 1.5v10M2 4h2M2 6h2M8 4h2M8 6h2" stroke="#666" />
        </Svg>
        <Svg w={12} h={13} className="ml-[23px]">
          <path d="M.5.5h11v1M1.5 1.5v6h9v-6M6 7.5v5M4 12.5h4" stroke="#666" />
        </Svg>
        <span className="ml-[17px] w-[6px] h-px bg-[#888]" />
        <span className="ml-[8px] w-[88px] h-px bg-[#aaa] relative">
          <span className="absolute left-[29px] -top-[5px] w-[4px] h-[11px] bg-[#777]" />
        </span>
        <span className="ml-[3px] text-[11px] leading-none text-[#777]">+</span>
        <span className="ml-[9px] w-[28px]">79%</span>
        <Svg w={12} h={14}>
          <rect x="2.5" y="3.5" width="7" height="7" stroke="#666" />
          <path d="M6 0l2 2H4zM6 14l2-2H4zM0 7l2-2v4zM12 7l-2-2v4z" fill="#666" />
        </Svg>
      </div>
    </div>
  );
}

export default function App() {
  return (
    <div className="relative w-[1200px] h-[675px] overflow-hidden flex flex-col bg-[#e6e6e6] font-['Roboto',sans-serif]">
      <TitleBar />
      <Tabs />
      <Ribbon />
      <div className="flex flex-1 min-h-0">
        <SlidePanel />
        <div className="w-[68px] shrink-0" />
        <div className="w-[882px] mt-[9px] mb-[10px] bg-white relative shrink-0 shadow-[0_0_2px_rgba(0,0,0,0.1)]">
          <div className="absolute left-[60px] top-[100px] w-[376px] h-[347px] border border-dashed border-[#888]" />
          <Handle className="left-[55px] top-[442px]" />
          <Handle className="left-[243px] top-[442px]" />
          <Handle className="left-[431px] top-[442px]" />
        </div>
        <div className="ml-[65px] w-[14px] bg-[#dcdcdc] mt-[1px] flex flex-col shrink-0">
          <div className="h-[14px] bg-white flex items-center justify-center">
            <span className="w-0 h-0 border-x-[4px] border-x-transparent border-b-[4px] border-b-[#666]" />
          </div>
          <div className="flex-1" />
          <div className="h-[22px] bg-white" />
          <div className="h-[3px] bg-[#e6e6e6]" />
          <div className="h-[11px] bg-white flex items-center justify-center">
            <span className="w-0 h-0 border-x-[4px] border-x-transparent border-t-[4px] border-t-[#666]" />
          </div>
          <div className="h-[42px] bg-[#e6e6e6] flex flex-col items-center pt-[6px] gap-[8px]">
            <Svg w={9} h={8}><path d="M0 2h9M4.5 3L0 8h9z" stroke="#666" fill="#666" /></Svg>
            <Svg w={9} h={8}><path d="M0 6h9M4.5 5L0 0h9z" stroke="#666" fill="#666" /></Svg>
          </div>
        </div>
      </div>
      <StatusBar />
      <Dialog />
      <div className="absolute right-0 top-[31px] bottom-0 w-[2px] bg-[#9a9a9a]" />
      <div className="absolute left-0 top-[31px] bottom-0 w-px bg-[#b0b0b0]" />
    </div>
  );
}
